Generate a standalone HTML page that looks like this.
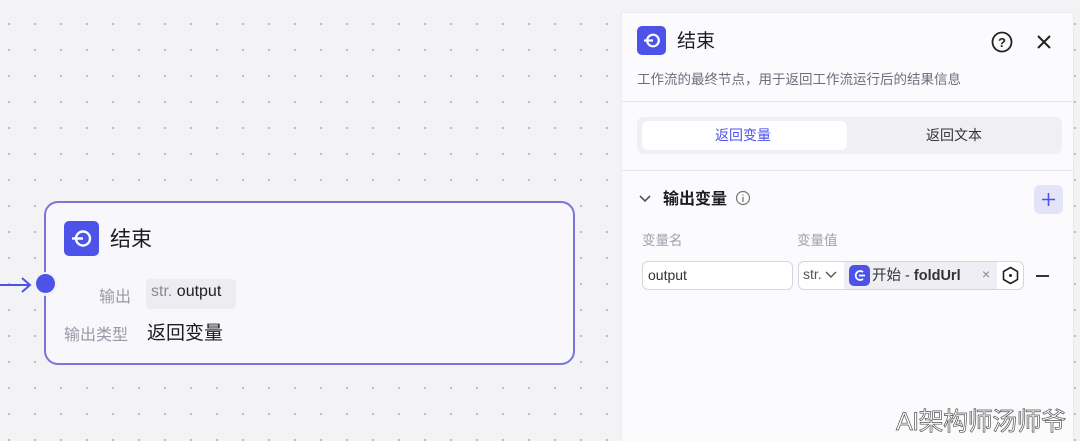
<!DOCTYPE html>
<html><head><meta charset="utf-8"><style>
*{margin:0;padding:0;box-sizing:border-box}
body{width:1080px;height:441px;overflow:hidden;font-family:"Liberation Sans","Noto Sans CJK SC",sans-serif;background:#f3f3f6;position:relative;
background-image:radial-gradient(circle,#b8b8c4 0.9px,transparent 1.3px);background-size:26px 26px;background-position:-4px 11px}
.node{position:absolute;left:44px;top:201px;width:531px;height:164px;border:2px solid #7b74d8;border-radius:14px;background:#f8f8fc}
.ic{position:absolute;background:#4d53e8;border-radius:5px}
.panel{position:absolute;left:621px;top:12px;width:453px;height:429px;background:#fbfbfe;border-left:1px solid #ebebf0;border-right:1px solid #e6e6ec;border-top:1px solid #ebebf0}
.t{position:absolute;white-space:nowrap}
</style></head><body>
<svg style="position:absolute;left:0;top:275px" width="40" height="20"><path d="M0 10H30M22 3L30 10L22 17" stroke="#4d53e8" stroke-width="2" fill="none"/></svg>
<div class="node">
 <div class="ic" style="left:18px;top:18px;width:35px;height:35px"><svg width="35" height="35"><circle cx="19" cy="17.5" r="7" stroke="#fff" stroke-width="2.4" fill="none"/><path d="M8 17.5H19" stroke="#fff" stroke-width="2.4"/></svg></div>
 <div class="t" style="left:64px;top:20px;font-size:21px;color:#1c1d23">结束</div>
 <div class="t" style="left:53px;top:80px;font-size:16px;color:#9a9aa6">输出</div>
 <div class="t" style="left:100px;top:76px;height:30px;width:90px;background:#ececf1;border-radius:4px"></div>
 <div class="t" style="left:105px;top:80px;font-size:16px;color:#8a8a96">str.<span style="color:#1c1d23"> output</span></div>
 <div class="t" style="left:18px;top:118px;font-size:16px;color:#9a9aa6">输出类型</div>
 <div class="t" style="left:101px;top:115px;font-size:19px;color:#1c1d23">返回变量</div>
</div>
<div style="position:absolute;left:34px;top:272px;width:24px;height:24px;border-radius:50%;background:#f3f3f6"></div>
<div style="position:absolute;left:36px;top:274px;width:19px;height:19px;border-radius:50%;background:#4d53e8"></div>

<div class="panel">
 <div class="ic" style="left:15px;top:13px;width:29px;height:29px"><svg width="29" height="29"><circle cx="16" cy="14.5" r="5.8" stroke="#fff" stroke-width="2.2" fill="none"/><path d="M7 14.5H16" stroke="#fff" stroke-width="2.2"/></svg></div>
 <div class="t" style="left:55px;top:13px;font-size:19px;color:#1c1d23">结束</div>
 <svg class="t" style="left:368px;top:17px" width="24" height="24"><circle cx="12" cy="12" r="9.5" stroke="#222" stroke-width="1.8" fill="none"/><text x="12" y="17" font-size="13" text-anchor="middle" font-family="Liberation Sans" font-weight="bold" fill="#222">?</text></svg>
 <svg class="t" style="left:413px;top:20px" width="18" height="18"><path d="M3 3L15 15M15 3L3 15" stroke="#222" stroke-width="2"/></svg>
 <div class="t" style="left:15px;top:55px;font-size:13.5px;color:#6e6e7a">工作流的最终节点，用于返回工作流运行后的结果信息</div>
 <div style="position:absolute;left:0;top:88px;width:452px;height:1px;background:#e4e4ea"></div>
 <div style="position:absolute;left:15px;top:104px;width:425px;height:37px;background:#f0f0f4;border-radius:7px"></div>
 <div style="position:absolute;left:20px;top:108px;width:205px;height:29px;background:#fff;border-radius:6px"></div>
 <div class="t" style="left:93px;top:112px;font-size:14px;color:#4d53e8">返回变量</div>
 <div class="t" style="left:304px;top:112px;font-size:14px;color:#333">返回文本</div>
 <div style="position:absolute;left:0;top:157px;width:452px;height:1px;background:#e4e4ea"></div>
 <svg class="t" style="left:17px;top:181px" width="12" height="10"><path d="M1 2L6 7L11 2" stroke="#555" stroke-width="1.6" fill="none"/></svg>
 <div class="t" style="left:41px;top:172px;font-size:16px;color:#1c1d23;font-weight:bold">输出变量</div>
 <svg class="t" style="left:113px;top:177px" width="16" height="16"><circle cx="8" cy="8" r="6.5" stroke="#777" stroke-width="1.2" fill="none"/><path d="M8 7V12M8 4.5V5.5" stroke="#777" stroke-width="1.3"/></svg>
 <div style="position:absolute;left:412px;top:172px;width:29px;height:29px;background:#e4e4f8;border-radius:6px"></div>
 <svg class="t" style="left:418px;top:178px" width="17" height="17"><path d="M8.5 2V15M2 8.5H15" stroke="#4d53e8" stroke-width="1.6"/></svg>
 <div class="t" style="left:20px;top:216px;font-size:13.5px;color:#a0a0ac">变量名</div>
 <div class="t" style="left:175px;top:216px;font-size:13.5px;color:#a0a0ac">变量值</div>
 <div style="position:absolute;left:20px;top:248px;width:151px;height:29px;border:1px solid #d6d6de;border-radius:6px;background:#fff"></div>
 <div class="t" style="left:26px;top:254px;font-size:14px;color:#333">output</div>
 <div style="position:absolute;left:176px;top:248px;width:226px;height:29px;border:1px solid #d6d6de;border-radius:6px;background:#fff;overflow:hidden">
  <div style="position:absolute;left:45px;top:0;width:153px;height:29px;background:#eeeef4"></div>
 </div>
 <div class="t" style="left:181px;top:253px;font-size:14px;color:#555">str.</div>
 <svg class="t" style="left:203px;top:257px" width="12" height="10"><path d="M1 2L6 7L11 2" stroke="#555" stroke-width="1.4" fill="none"/></svg>
 <div class="ic" style="left:227px;top:252px;width:21px;height:21px"><svg width="21" height="21"><path d="M14 7A4.5 4.5 0 1 0 14 14" stroke="#fff" stroke-width="1.8" fill="none"/><path d="M10 10.5H16" stroke="#fff" stroke-width="1.8"/></svg></div>
 <div class="t" style="left:250px;top:251px;font-size:14.5px;color:#333">开始 - <b>foldUrl</b></div>
 <div class="t" style="left:360px;top:253px;font-size:14px;color:#888">×</div>
 <svg class="t" style="left:378px;top:252px" width="21" height="21"><path d="M10.5 2.5L17.5 6.5V14.5L10.5 18.5L3.5 14.5V6.5Z" stroke="#222" stroke-width="1.6" fill="none" stroke-linejoin="round"/><circle cx="10.5" cy="10.5" r="1.5" fill="#222"/></svg>
 <div style="position:absolute;left:414px;top:262px;width:13px;height:2px;background:#333"></div>
</div>
<div class="t" style="left:896px;top:402px;font-size:25px;color:#fff;-webkit-text-stroke:0.7px #555;letter-spacing:-0.5px">AI架构师汤师爷</div>
</body></html>
